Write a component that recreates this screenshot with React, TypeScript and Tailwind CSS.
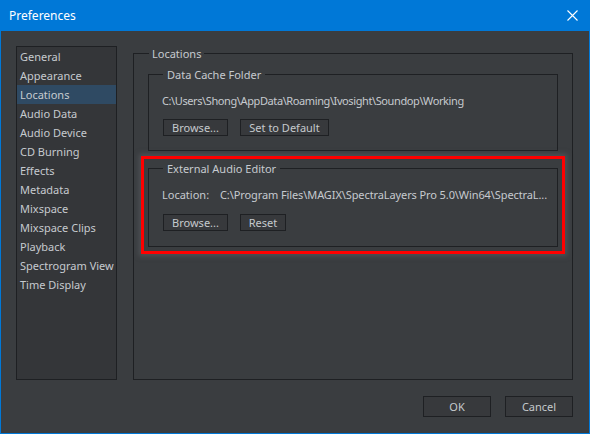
import React from "react";

const items = [
  "General",
  "Appearance",
  "Locations",
  "Audio Data",
  "Audio Device",
  "CD Burning",
  "Effects",
  "Metadata",
  "Mixspace",
  "Mixspace Clips",
  "Playback",
  "Spectrogram View",
  "Time Display",
];

function Btn({ w, h, children }: { w: string; h: string; children: React.ReactNode }) {
  return (
    <button
      className={`${w} ${h} border border-[#1e2023] bg-[#37393c] text-[#c5c9cd] flex items-center justify-center leading-none`}
    >
      {children}
    </button>
  );
}

export default function App() {
  return (
    <div
      className="w-[590px] h-[434px] bg-[#0078d7] flex flex-col px-px pb-px text-[11px]"
      style={{ fontFamily: '"Noto Sans", "Open Sans", sans-serif' }}
    >
      <div className="h-[31px] flex items-center justify-between pl-[8px] pr-[11px] text-white">
        <span className="text-[12px]">Preferences</span>
        <svg width="11" height="11" viewBox="0 0 11 11">
          <path d="M0.5 0.5 L10.5 10.5 M10.5 0.5 L0.5 10.5" stroke="white" strokeWidth="1.1" />
        </svg>
      </div>
      <div className="flex-1 bg-[#3a3d40] flex flex-col pt-[14px] pl-[15px] pr-[16px] pb-[16px] text-[#c6cacf]">
        <div className="flex-1 flex gap-[16px] min-h-0">
          <div className="w-[101px] mt-px border border-[#1e2023] bg-[#343639] flex flex-col">
            {items.map((it) => (
              <div
                key={it}
                className={`h-[19px] flex items-center pl-[3px] pt-px whitespace-nowrap ${
                  it === "Locations" ? "bg-[#2f4a63]" : ""
                }`}
              >
                {it}
              </div>
            ))}
          </div>
          <fieldset className="flex-1 border border-[#1e2023] p-0 m-0 min-w-0">
            <legend className="ml-[15px] px-[3px] leading-[15px] pt-px">Locations</legend>
            <div className="px-[7px] pt-[5px] flex flex-col">
              <fieldset className="mx-[7px] border border-[#1e2023] p-0 m-0 min-w-0">
                <legend className="ml-[14px] px-[4px] leading-[15px] pt-px">Data Cache Folder</legend>
                <div className="pl-[13px] pt-[10px] pb-[14px] flex flex-col">
                  <div className="leading-[15px] whitespace-nowrap pt-px tracking-[-0.4px]">
                    C:\Users\Shong\AppData\Roaming\Ivosight\Soundop\Working
                  </div>
                  <div className="flex gap-[12px] mt-[11px] pl-px">
                    <Btn w="w-[65px]" h="h-[17px]">Browse...</Btn>
                    <Btn w="w-[89px]" h="h-[17px]">Set to Default</Btn>
                  </div>
                </div>
              </fieldset>
              <div className="mt-[5px] border-[3px] border-[#ff0000] pt-px pb-[4px] px-[4px] shadow-[0_0_5px_2px_rgba(95,98,102,0.55)]">
                <fieldset className="border border-[#1e2023] p-0 m-0 min-w-0">
                  <legend className="ml-[14px] px-[4px] leading-[15px] pt-px">External Audio Editor</legend>
                  <div className="pl-[13px] pt-[10px] pb-[15px] flex flex-col">
                    <div className="leading-[15px] whitespace-nowrap flex pt-px">
                      <span className="w-[58px] shrink-0">Location:</span>
                      <span className="tracking-[-0.1px]">C:\Program Files\MAGIX\SpectraLayers Pro 5.0\Win64\SpectraL...</span>
                    </div>
                    <div className="flex gap-[12px] mt-[12px] pl-px">
                      <Btn w="w-[65px]" h="h-[17px]">Browse...</Btn>
                      <Btn w="w-[46px]" h="h-[17px]">Reset</Btn>
                    </div>
                  </div>
                </fieldset>
              </div>
            </div>
          </fieldset>
        </div>
        <div className="flex justify-end gap-[14px] mt-[16px]">
          <Btn w="w-[68px]" h="h-[21px]">OK</Btn>
          <Btn w="w-[68px]" h="h-[21px]">Cancel</Btn>
        </div>
      </div>
    </div>
  );
}
